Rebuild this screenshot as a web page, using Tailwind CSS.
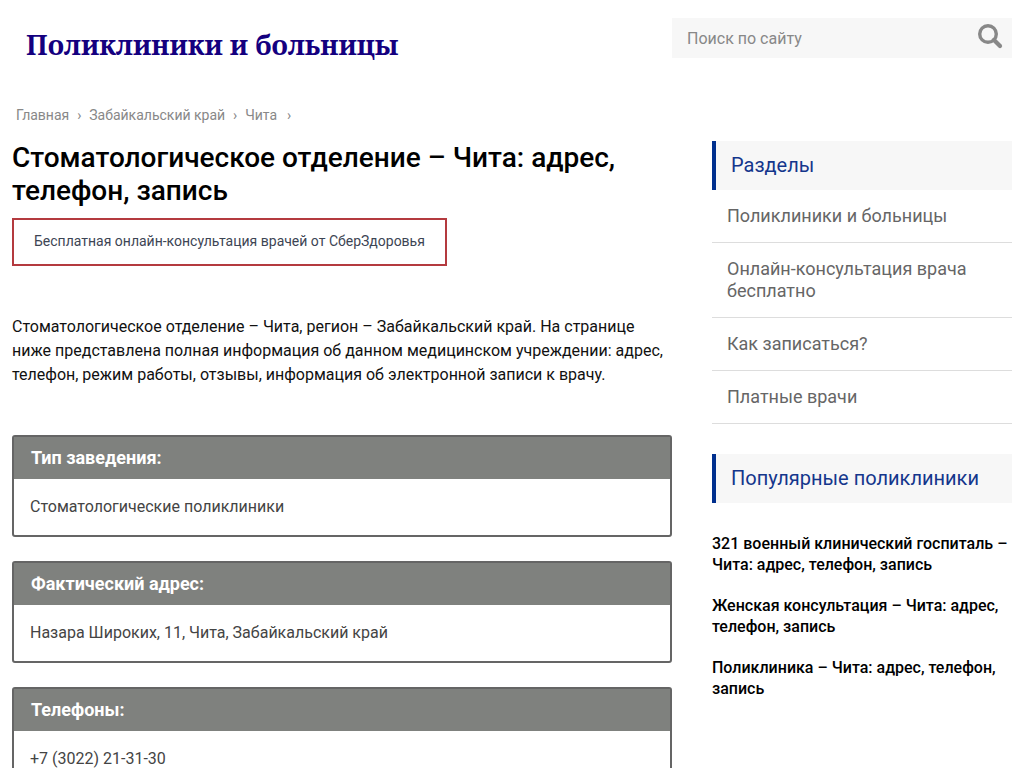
<!DOCTYPE html>
<html lang="ru">
<head>
<meta charset="utf-8">
<meta name="viewport" content="width=device-width, initial-scale=1">
<title>Стоматологическое отделение – Чита</title>
<script src="https://cdn.jsdelivr.net/npm/@tailwindcss/browser@4"></script>
</head>
<body class="bg-white font-['Roboto',sans-serif] text-base text-black overflow-x-hidden">
<div class="max-w-[1200px] mx-auto px-3">
  <header class="flex justify-between items-start pt-[18px] pb-[38px]">
    <a href="#" class="pl-[14px] pt-[7px] text-[27px] leading-10 font-bold text-[#14007f] font-['Noto_Serif','DejaVu_Serif_Condensed','DejaVu_Serif',serif]">Поликлиники и больницы</a>
    <form class="flex w-[340px] h-10 bg-[#f7f7f7]">
      <input type="search" aria-label="Поиск по сайту" placeholder="Поиск по сайту" class="flex-1 min-w-0 px-[15px] pt-[2px] outline-none placeholder:text-[#888888]">
      <button type="button" aria-label="Найти" class="w-11 flex justify-center pt-[5px]">
        <svg class="w-[26px] h-[26px]" viewBox="0 0 26 26" fill="none" stroke="#888" aria-hidden="true"><circle cx="11" cy="11" r="8.3" stroke-width="3.4"/><path d="M17 17l6 6" stroke-width="4.2" stroke-linecap="round"/></svg>
      </button>
    </form>
  </header>
  <div class="flex gap-10 items-start">
    <main class="flex-1 min-w-0">
      <nav aria-label="Навигация" class="flex pl-1 text-sm leading-6 text-[#888888]">
        <a href="#">Главная</a><span class="w-5 text-center">›</span><a href="#">Забайкальский край</a><span class="w-5 text-center">›</span><a href="#">Чита</a><span class="w-6 text-center">›</span>
      </nav>
      <h1 class="mt-[14px] text-[28px] leading-[33px] font-medium">Стоматологическое отделение – Чита: адрес, телефон, запись</h1>
      <a href="#" class="inline-block mt-[11px] border-2 border-[#b43a3f] px-5 pt-[9px] pb-[11px] text-sm leading-6 text-[#3d4554]">Бесплатная онлайн-консультация врачей от СберЗдоровья</a>
      <p class="mt-[49px] mb-12 leading-6 text-[#111111]">Стоматологическое отделение – Чита, регион – Забайкальский край. На странице ниже представлена полная информация об данном медицинском учреждении: адрес, телефон, режим работы, отзывы, информация об электронной записи к врачу.</p>
      <section class="mb-6 border-2 border-[#656565] rounded-[3px]">
        <h2 class="bg-[#7f817e] px-[17px] py-[9px] text-lg leading-6 font-bold text-white">Тип заведения:</h2>
        <p class="p-4 leading-6 text-[#444444]">Стоматологические поликлиники</p>
      </section>
      <section class="mb-6 border-2 border-[#656565] rounded-[3px]">
        <h2 class="bg-[#7f817e] px-[17px] py-[9px] text-lg leading-6 font-bold text-white">Фактический адрес:</h2>
        <p class="p-4 leading-6 text-[#444444]">Назара Широких, 11, Чита, Забайкальский край</p>
      </section>
      <section class="mb-6 border-2 border-[#656565] rounded-[3px]">
        <h2 class="bg-[#7f817e] px-[17px] py-[9px] text-lg leading-6 font-bold text-white">Телефоны:</h2>
        <p class="p-4 leading-6 text-[#444444]">+7 (3022) 21-31-30</p>
      </section>
    </main>
    <aside class="w-[300px] pt-[38px]">
      <h2 class="border-l-4 border-[#002f8e] bg-[#f7f7f7] px-[15px] py-3 text-xl leading-[25px] text-[#14368c]">Разделы</h2>
      <ul class="text-lg leading-[22px] text-[#666666]">
        <li class="border-b border-[#dddddd] p-[15px]"><a href="#">Поликлиники и больницы</a></li>
        <li class="border-b border-[#dddddd] p-[15px]"><a href="#">Онлайн-консультация врача бесплатно</a></li>
        <li class="border-b border-[#dddddd] p-[15px]"><a href="#">Как записаться?</a></li>
        <li class="border-b border-[#dddddd] p-[15px]"><a href="#">Платные врачи</a></li>
      </ul>
      <h2 class="my-[30px] border-l-4 border-[#002f8e] bg-[#f7f7f7] px-[15px] py-3 text-xl leading-[25px] text-[#14368c]">Популярные поликлиники</h2>
      <ul class="flex flex-col gap-5 leading-[21px] font-medium">
        <li><a href="#">321 военный клинический госпиталь – Чита: адрес, телефон, запись</a></li>
        <li><a href="#">Женская консультация – Чита: адрес, телефон, запись</a></li>
        <li><a href="#">Поликлиника – Чита: адрес, телефон, запись</a></li>
      </ul>
    </aside>
  </div>
</div>
</body>
</html>
